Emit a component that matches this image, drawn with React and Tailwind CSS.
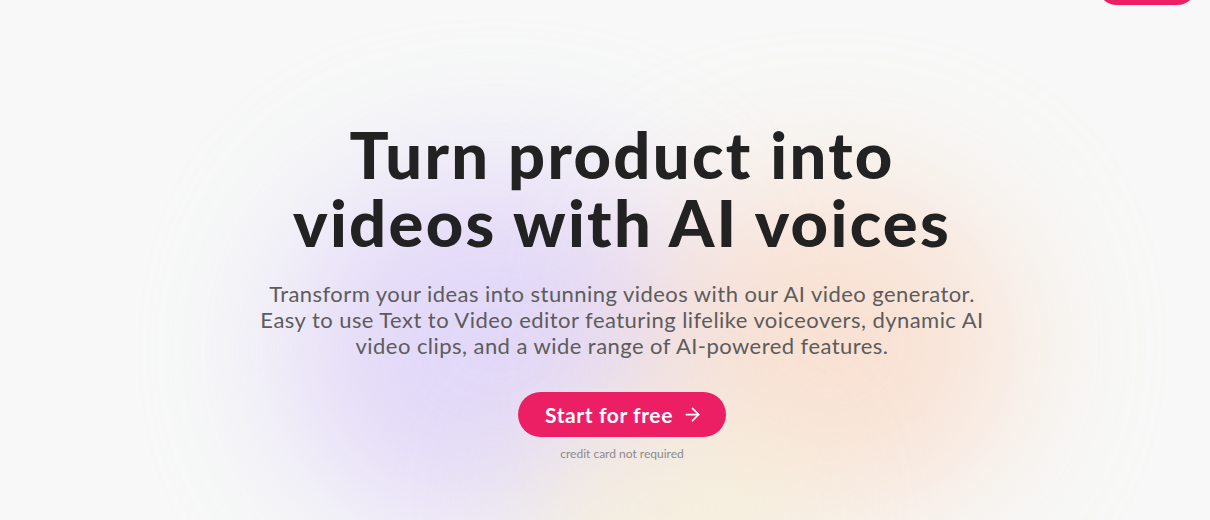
import { ArrowRight } from "lucide-react";

export default function App() {
  return (
    <div className="relative min-h-screen h-[520px] overflow-hidden bg-[#f7f8f7] font-['Lato',sans-serif]">
      {/* blobs de fond */}
      <div className="pointer-events-none absolute left-[285px] top-[170px] h-[360px] w-[420px] rounded-full bg-[#dbcdf9] opacity-75 blur-[70px]" />
      <div className="pointer-events-none absolute left-[640px] top-[180px] h-[330px] w-[380px] rounded-full bg-[#fad8c4] opacity-70 blur-[70px]" />
      <div className="pointer-events-none absolute left-[515px] top-[410px] h-[200px] w-[300px] rounded-full bg-[#f6efd6] opacity-70 blur-[60px]" />

      <div className="relative flex justify-end pr-[13px]">
        <button className="-mt-[35px] h-[40px] w-[100px] rounded-full bg-[#ec1f64]" />
      </div>

      <main className="relative flex flex-col items-center pl-[34px] pt-[115px] text-center">
        <h1 className="text-[65px] font-black leading-[68px] tracking-[2.3px] text-[#222]">
          Turn product into
          <br />
          videos with AI voices
        </h1>
        <p className="mt-[25px] text-[22px] leading-[26px] tracking-[0.45px] text-[#5c5c5c]">
          Transform your ideas into stunning videos with our AI video generator.
          <br />
          Easy to use Text to Video editor featuring lifelike voiceovers, dynamic AI
          <br />
          video clips, and a wide range of AI-powered features.
        </p>
        <button className="mt-[33px] flex h-[45px] w-[208px] items-center justify-center gap-[9px] rounded-full bg-[#ec1f64] pl-[4px] text-[21px] font-bold tracking-[0.6px] text-white">
          Start for free
          <ArrowRight size={21} strokeWidth={2} />
        </button>
        <p className="mt-[9px] text-[12px] leading-[16px] text-[#8a8a8a]">credit card not required</p>
      </main>
    </div>
  );
}
